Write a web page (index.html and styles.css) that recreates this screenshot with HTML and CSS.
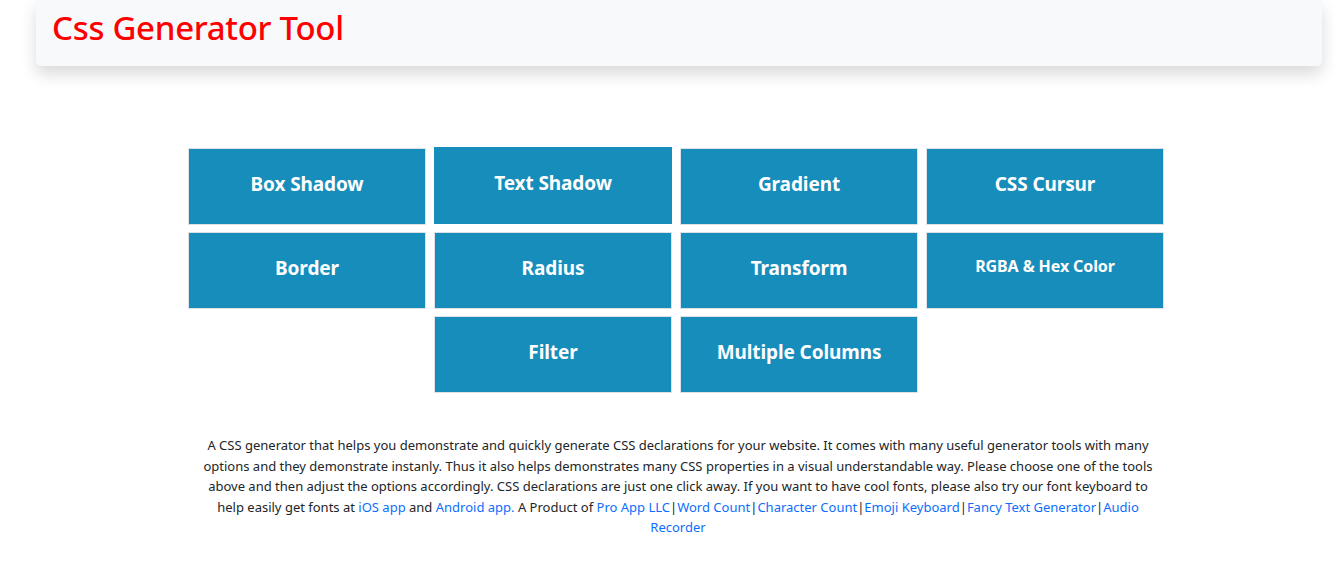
FILE: index.html
```html
<!DOCTYPE html>
<html lang="en">
<head>
<meta charset="utf-8">
<title>Css Generator Tool</title>
<link rel="stylesheet" href="styles.css">
</head>
<body>
<header class="topbar">
  <h1 class="brand">Css Generator Tool</h1>
</header>
<main class="main">
  <nav class="tools">
    <a class="tool" href="#">Box Shadow</a>
    <a class="tool tool-raised" href="#">Text Shadow</a>
    <a class="tool" href="#">Gradient</a>
    <a class="tool" href="#">CSS Cursur</a>
    <a class="tool" href="#">Border</a>
    <a class="tool" href="#">Radius</a>
    <a class="tool" href="#">Transform</a>
    <a class="tool tool-small" href="#">RGBA &amp; Hex Color</a>
    <a class="tool" href="#">Filter</a>
    <a class="tool" href="#">Multiple Columns</a>
  </nav>
  <p class="about">A CSS generator that helps you demonstrate and quickly generate CSS declarations for your website. It comes with many useful generator tools with many options and they demonstrate instanly. Thus it also helps demonstrates many CSS properties in a visual understandable way. Please choose one of the tools above and then adjust the options accordingly. CSS declarations are just one click away. If you want to have cool fonts, please also try our font keyboard to help easily get fonts at <a href="#">iOS app</a> and <a href="#">Android app.</a> A Product of <a href="#">Pro App LLC</a><span class="sep">|</span><a href="#">Word Count</a><span class="sep">|</span><a href="#">Character Count</a><span class="sep">|</span><a href="#">Emoji Keyboard</a><span class="sep">|</span><a href="#">Fancy Text Generator</a><span class="sep">|</span><a href="#">Audio Recorder</a></p>
</main>
</body>
</html>
```
FILE: styles.css
```css
html, body {
  margin: 0;
  padding: 0;
  background: #fff;
}
body {
  font-family: "Noto Sans", "Open Sans", sans-serif;
  color: #212529;
}
.topbar {
  margin: 0 16px 0 36px;
  height: 66px;
  background: #f8f9fa;
  border-radius: 0 0 5px 5px;
  box-shadow: 0 8px 16px rgba(0, 0, 0, 0.15);
  padding: 0 16px;
  box-sizing: border-box;
}
.brand {
  margin: 0;
  padding-top: 4px;
  font-size: 33px;
  font-weight: 500;
  color: #ff0000;
  line-height: 48px;
  letter-spacing: -0.3px;
}
.main {
  padding-top: 82px;
}
.tools {
  width: 976px;
  margin-left: 188px;
  display: flex;
  flex-wrap: wrap;
  justify-content: center;
  gap: 7px 8px;
}
.tool {
  width: 238px;
  height: 77px;
  box-sizing: border-box;
  border: 1px solid #dee2e6;
  background: #178dbb;
  color: #fff;
  text-decoration: none;
  font-weight: 700;
  font-size: 19px;
  display: flex;
  align-items: center;
  justify-content: center;
  padding-bottom: 6px;
  letter-spacing: -0.1px;
}
.tool-raised {
  border-color: #178dbb;
  margin-top: -1px;
  margin-bottom: 1px;
}
.tool-small {
  font-size: 16px;
  padding-bottom: 10px;
}
.about {
  width: 960px;
  margin: 42px 0 0 198px;
  text-align: center;
  font-size: 13px;
  line-height: 20.6px;
}
.about a {
  color: #0d6efd;
  text-decoration: none;
}
.sep {
  letter-spacing: -2px;
  margin-right: 2px;
}
```
